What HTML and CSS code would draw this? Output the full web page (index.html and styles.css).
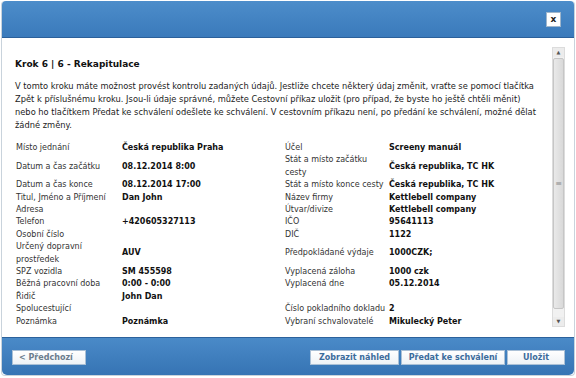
FILE: index.html
```html
<!DOCTYPE html>
<html lang="cs">
<head>
    <meta charset="UTF-8">
    <title>Krok 6 | 6 - Rekapitulace</title>
    <link rel="stylesheet" href="styles.css">
</head>
<body>
    <div class="okno">
        <!-- Hlavicka -->
        <div class="hlava">
            <div class="zavrit">x</div>
        </div>
        <!-- Obsah -->
        <div class="telo">
            <div class="obsah">
                <div class="nadpis">Krok 6 | 6 - Rekapitulace</div>
                <p class="popis">V tomto kroku máte možnost provést kontrolu zadaných údajů. Jestliže chcete některý údaj změnit, vraťte se pomocí tlačítka Zpět k příslušnému kroku. Jsou-li údaje správné, můžete Cestovní příkaz uložit (pro případ, že byste ho ještě chtěli měnit)<br>nebo ho tlačítkem Předat ke schválení odešlete ke schválení. V cestovním příkazu není, po předání ke schválení, možné dělat žádné změny.</p>
                <div class="tabulka">
                    <div>Místo jednání</div><div class="hodnota">Česká republika Praha</div><div>Účel</div><div class="hodnota">Screeny manuál</div>
                    <div>Datum a čas začátku</div><div class="hodnota">08.12.2014 8:00</div><div>Stát a místo začátku cesty</div><div class="hodnota">Česká republika, TC HK</div>
                    <div>Datum a čas konce</div><div class="hodnota">08.12.2014 17:00</div><div>Stát a místo konce cesty</div><div class="hodnota">Česká republika, TC HK</div>
                    <div>Titul, Jméno a Příjmení</div><div class="hodnota">Dan John</div><div>Název firmy</div><div class="hodnota">Kettlebell company</div>
                    <div>Adresa</div><div class="hodnota"></div><div>Útvar/divize</div><div class="hodnota">Kettlebell company</div>
                    <div>Telefon</div><div class="hodnota">+420605327113</div><div>IČO</div><div class="hodnota">95641113</div>
                    <div>Osobní číslo</div><div class="hodnota"></div><div>DIČ</div><div class="hodnota">1122</div>
                    <div>Určený dopravní prostředek</div><div class="hodnota">AUV</div><div>Předpokládané výdaje</div><div class="hodnota">1000CZK;</div>
                    <div>SPZ vozidla</div><div class="hodnota">SM 455598</div><div>Vyplacená záloha</div><div class="hodnota">1000 czk</div>
                    <div>Běžná pracovní doba</div><div class="hodnota">0:00 - 0:00</div><div>Vyplacená dne</div><div class="hodnota">05.12.2014</div>
                    <div>Řidič</div><div class="hodnota">John Dan</div><div></div><div class="hodnota"></div>
                    <div>Spolucestující</div><div class="hodnota"></div><div>Číslo pokladního dokladu</div><div class="hodnota">2</div>
                    <div>Poznámka</div><div class="hodnota">Poznámka</div><div>Vybraní schvalovatelé</div><div class="hodnota">Mikulecký Peter</div>
                </div>
            </div>
            <!-- Posuvnik -->
            <div class="posuvnik">
                <div class="sipka">&#9650;</div>
                <div class="drazka">
                    <div class="jezdec">&#8801;</div>
                </div>
                <div class="sipka">&#9660;</div>
            </div>
        </div>
        <!-- Tlacitka -->
        <div class="pata">
            <button class="tlacitko zpet">&lt; Předchozí</button>
            <div class="vpravo">
                <button class="tlacitko nahled">Zobrazit náhled</button>
                <button class="tlacitko predat">Předat ke schválení</button>
                <button class="tlacitko ulozit">Uložit</button>
            </div>
        </div>
    </div>
</body>
</html>
```

FILE: styles.css
```css
:root{
    --okraj: #c9d3dc;
    --text: #333333;
    --hodnota: #111111;
}
body{
    margin: 0;
    padding: 1px;
    background-color: #ffffff;
    font-family: "DejaVu Sans", Verdana, sans-serif;
    font-size: 8.3px;
    color: var(--text);
}
.okno{
    width: 574px;
    height: 375px;
    border: 1px solid var(--okraj);
    border-top: 0;
    border-radius: 4px;
    display: flex;
    flex-direction: column;
    box-sizing: border-box;
}
.hlava{
    height: 37px;
    flex: 0 0 auto;
    background: linear-gradient(to bottom, #4d8dca, #3a7abb);
    border-bottom: 1px solid #2b609a;
    border-radius: 4px 4px 0 0;
    display: flex;
    justify-content: flex-end;
    align-items: flex-start;
    padding: 11px 13px 0 0;
    box-sizing: border-box;
}
.zavrit{
    width: 15px;
    height: 15px;
    background-color: #ffffff;
    border: 1px solid #9fb6cc;
    box-sizing: border-box;
    color: #222222;
    font-weight: bold;
    font-size: 9px;
    line-height: 12px;
    text-align: center;
}
.telo{
    flex: 1 1 auto;
    display: flex;
    padding-bottom: 9px;
    min-height: 0;
}
.obsah{
    flex: 1 1 auto;
    overflow: hidden;
    padding: 20px 0 0 13px;
}
.nadpis{
    font-weight: bold;
    font-size: 9px;
    line-height: 12px;
    color: #111111;
}
.popis{
    margin: 10px 0 0 0;
    line-height: 13px;
    color: #222222;
}
.tabulka{
    margin-top: 10px;
    display: grid;
    grid-template-columns: 106px 163px 104px 1fr;
    align-items: center;
    font-size: 8px;
    line-height: 12.4px;
    padding-left: 1px;
}
.hodnota{
    font-weight: bold;
    color: var(--hodnota);
}
.posuvnik{
    flex: 0 0 11px;
    margin: 9px 9px 1px 4px;
    display: flex;
    flex-direction: column;
    background-color: #f1f1f1;
    border: 1px solid #dcdcdc;
}
.sipka{
    height: 9px;
    font-size: 5px;
    line-height: 9px;
    text-align: center;
    color: #555555;
    background-color: #ececec;
}
.drazka{
    flex: 1 1 auto;
    display: flex;
    padding: 1px 0 8px 0;
}
.jezdec{
    flex: 1 1 auto;
    background: linear-gradient(to right, #e9e9e9, #d9d9d9);
    border: 1px solid #c6c6c6;
    border-radius: 2px;
    display: flex;
    align-items: center;
    justify-content: center;
    color: #8a8a8a;
    font-size: 8px;
}
.pata{
    height: 38px;
    flex: 0 0 auto;
    background: linear-gradient(to bottom, #4a8ac8, #3674b4);
    border-top: 1px solid #2c629c;
    border-radius: 0 0 5px 5px;
    display: flex;
    justify-content: space-between;
    align-items: flex-start;
    padding: 12px 9px 0 10px;
    box-sizing: border-box;
}
.vpravo{
    display: flex;
    gap: 2px;
}
.tlacitko{
    height: 15px;
    padding: 0;
    border: 1px solid #aac0d6;
    background: linear-gradient(to bottom, #ffffff, #eef2f6);
    font-family: "DejaVu Sans", Verdana, sans-serif;
    font-size: 8px;
    font-weight: bold;
    color: #3c6c9c;
    line-height: 13px;
    text-align: center;
}
.zpet{
    width: 74px;
    color: #6b7c8c;
    text-align: left;
    padding-left: 6px;
}
.nahled{
    width: 89px;
}
.predat{
    width: 104px;
}
.ulozit{
    width: 58px;
}
```
